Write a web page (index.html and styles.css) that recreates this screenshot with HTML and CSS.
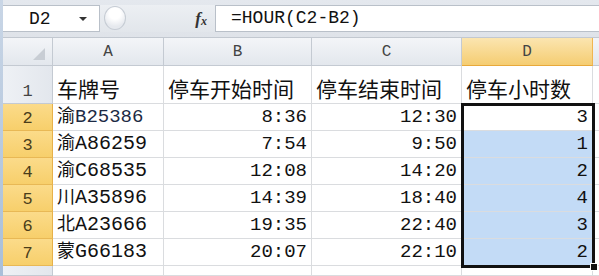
FILE: index.html
```html
<!DOCTYPE html>
<html>
<head>
<meta charset="utf-8">
<link rel="stylesheet" href="styles.css">
</head>
<body>
<div class="app">
  <div class="edge"></div>
  <div class="main">
    <div class="fbar">
      <div class="namebox"><span class="name">D2</span><span class="arrow"></span></div>
      <div class="mid">
        <span class="knob"></span>
        <span class="fx">f<sub>x</sub></span>
      </div>
      <div class="formula">=HOUR(C2-B2)</div>
    </div>
    <div class="sheet">
      <div class="grid">
        <div class="corner"><span class="tri"></span></div>
        <div class="ch">A</div>
        <div class="ch">B</div>
        <div class="ch">C</div>
        <div class="ch sel">D</div>
        <div class="ch last"></div>

        <div class="rh">1</div>
        <div class="c t"><span class="tx">车牌号</span></div>
        <div class="c t"><span class="tx">停车开始时间</span></div>
        <div class="c t"><span class="tx">停车结束时间</span></div>
        <div class="c t"><span class="tx">停车小时数</span></div>
        <div class="c e"></div>

        <div class="rh sel">2</div>
        <div class="c"><span class="v pl"><span class="zh">渝</span><span class="blue">B25386</span></span></div>
        <div class="c r"><span class="v">8:36</span></div>
        <div class="c r"><span class="v">12:30</span></div>
        <div class="c r act"><span class="v">3</span></div>
        <div class="c e"></div>

        <div class="rh sel">3</div>
        <div class="c"><span class="v pl"><span class="zh">渝</span>A86259</span></div>
        <div class="c r"><span class="v">7:54</span></div>
        <div class="c r"><span class="v">9:50</span></div>
        <div class="c r hl"><span class="v">1</span></div>
        <div class="c e"></div>

        <div class="rh sel">4</div>
        <div class="c"><span class="v pl"><span class="zh">渝</span>C68535</span></div>
        <div class="c r"><span class="v">12:08</span></div>
        <div class="c r"><span class="v">14:20</span></div>
        <div class="c r hl"><span class="v">2</span></div>
        <div class="c e"></div>

        <div class="rh sel">5</div>
        <div class="c"><span class="v pl"><span class="zh">川</span>A35896</span></div>
        <div class="c r"><span class="v">14:39</span></div>
        <div class="c r"><span class="v">18:40</span></div>
        <div class="c r hl"><span class="v">4</span></div>
        <div class="c e"></div>

        <div class="rh sel">6</div>
        <div class="c"><span class="v pl"><span class="zh">北</span>A23666</span></div>
        <div class="c r"><span class="v">19:35</span></div>
        <div class="c r"><span class="v">22:40</span></div>
        <div class="c r hl"><span class="v">3</span></div>
        <div class="c e"></div>

        <div class="rh sel">7</div>
        <div class="c"><span class="v pl"><span class="zh">蒙</span>G66183</span></div>
        <div class="c r"><span class="v">20:07</span></div>
        <div class="c r"><span class="v">22:10</span></div>
        <div class="c r hl"><span class="v">2</span></div>
        <div class="c e"></div>

        <div class="rh"></div>
        <div class="c"></div>
        <div class="c"></div>
        <div class="c"></div>
        <div class="c"></div>
        <div class="c e"></div>
      </div>
      <div class="selbox"><span class="handle"></span></div>
    </div>
  </div>
</div>
</body>
</html>
```
FILE: styles.css
```css
html, body {
  margin: 0;
  padding: 0;
  width: 599px;
  height: 276px;
  overflow: hidden;
  background: #ffffff;
}

.app {
  display: flex;
  height: 276px;
}

.edge {
  width: 3px;
  background: linear-gradient(#c9d6e6, #a9bfd9);
  flex: none;
}

.main {
  flex: 1;
  display: flex;
  flex-direction: column;
  min-width: 0;
}

.fbar {
  height: 38px;
  box-sizing: border-box;
  padding: 5px 0 5px 0;
  display: flex;
  background: linear-gradient(#e4e8ee, #dfe3e9);
  border-bottom: 1px solid #c2c8d0;
}

.namebox {
  width: 97px;
  flex: none;
  background: #fff;
  border: 1px solid #b9c0c9;
  border-left: none;
  display: flex;
  align-items: center;
  box-sizing: border-box;
  font-family: "Liberation Mono", monospace;
  font-size: 18px;
  color: #111;
}

.name {
  margin-left: 26px;
}

.arrow {
  margin-left: 28px;
  width: 0;
  height: 0;
  border-left: 4px solid transparent;
  border-right: 4px solid transparent;
  border-top: 4px solid #333;
}

.mid {
  width: 115px;
  flex: none;
  position: relative;
  display: flex;
  align-items: center;
  justify-content: flex-end;
  padding-right: 8px;
  box-sizing: border-box;
  background: linear-gradient(#eceff3, #e2e6eb);
}

.knob {
  position: absolute;
  left: 4px;
  top: 1px;
  width: 22px;
  height: 24px;
  border-radius: 50%;
  border: 1px solid #c6ccd4;
  background: radial-gradient(circle at 50% 30%, #ffffff 0 30%, #e6e9ee 70%);
  box-sizing: border-box;
}

.fx {
  font-family: "Liberation Serif", serif;
  font-style: italic;
  font-weight: bold;
  font-size: 17px;
  color: #333;
}

.fx sub {
  font-size: 12px;
  vertical-align: -1px;
}

.formula {
  flex: 1;
  background: #fff;
  border: 1px solid #b9c0c9;
  border-right: none;
  box-sizing: border-box;
  padding-left: 15px;
  font-family: "Liberation Mono", monospace;
  font-size: 18px;
  line-height: 25px;
  color: #111;
}

.sheet {
  position: relative;
  flex: 1;
}

.grid {
  display: grid;
  grid-template-columns: 50px 111px 148px 150px 131px 1fr;
  grid-template-rows: 28px 38px repeat(6, 27px) 1fr;
  height: 238px;
}

.corner, .ch, .rh {
  background: linear-gradient(#f3f5f8, #e3e7ed);
  border-right: 1px solid #c4cad2;
  border-bottom: 1px solid #c4cad2;
  box-sizing: border-box;
}

.corner {
  position: relative;
}

.tri {
  position: absolute;
  right: 7px;
  bottom: 5px;
  width: 0;
  height: 0;
  border-left: 12px solid transparent;
  border-bottom: 12px solid #c8cdd4;
}

.ch {
  display: flex;
  align-items: center;
  justify-content: center;
  font-family: "Liberation Mono", monospace;
  font-size: 16px;
  color: #444;
}

.ch.sel {
  background: linear-gradient(#fbe5b0, #f5cd72);
  border-right-color: #f0b650;
  border-bottom-color: #e8a93a;
}

.ch.last {
  border-right: none;
}

.rh {
  display: flex;
  align-items: flex-end;
  justify-content: center;
  padding-bottom: 2px;
  font-family: "Liberation Mono", monospace;
  font-size: 17px;
  color: #444;
  background: linear-gradient(90deg, #eef1f5, #e3e7ed);
}

.rh.sel {
  background: linear-gradient(#fbdb8a, #f7cf6b);
  border-right-color: #e7b14a;
  border-bottom-color: #e8b855;
  color: #4a3d1a;
}

.c {
  border-right: 1px solid #dadcdf;
  border-bottom: 1px solid #dadcdf;
  box-sizing: border-box;
  display: flex;
  align-items: flex-end;
  padding: 0 4px 2px 4px;
  color: #111;
  white-space: nowrap;
}

.c.e {
  border-right: none;
}

.t {
  padding-bottom: 4px;
}

.tx {
  display: inline-block;
  font-family: "Noto Sans CJK SC", sans-serif;
  font-size: 21px;
  line-height: 22px;
  height: 22px;
}

.v {
  display: block;
  font-family: "Liberation Mono", monospace;
  font-size: 19px;
  line-height: 22px;
}

.v.pl {
  font-size: 20px;
}

.zh {
  font-family: "Noto Sans CJK SC", sans-serif;
  font-size: 18px;
}

.blue {
  font-size: 19px;
  color: #1c2a44;
}

.r {
  justify-content: flex-end;
}

.hl {
  background: #c3dbf6;
}

.act {
  background: #fff;
}

.selbox {
  position: absolute;
  left: 458px;
  top: 65px;
  width: 134px;
  height: 165px;
  border: 3px solid #111;
  box-sizing: border-box;
}

.handle {
  position: absolute;
  right: -6px;
  bottom: -6px;
  width: 6px;
  height: 6px;
  background: #111;
  border: 1px solid #fff;
}
```
